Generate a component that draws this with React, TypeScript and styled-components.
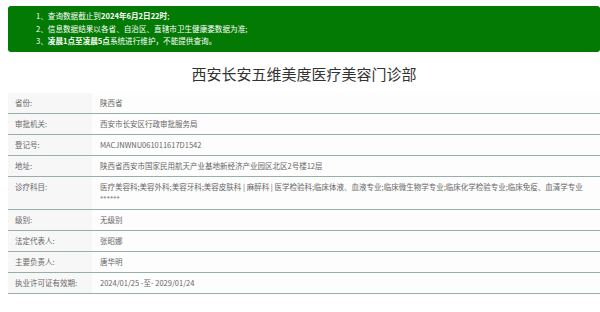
import React from "react";
import styled, { createGlobalStyle } from "styled-components";

const Global = createGlobalStyle`
  html, body { margin: 0; padding: 0; background: #fff; }
  body { font-family: "Noto Sans CJK SC", "Noto Sans", sans-serif; color: #555; }
`;

const Page = styled.div`
  padding: 6px 0 0 8px;
  width: 600px;
  box-sizing: border-box;
`;

const Notice = styled.ol`
  list-style: none;
  margin: 0;
  background: #037a03;
  border-radius: 3px;
  padding: 4px 0 4px 28px;
  height: 46px;
  box-sizing: border-box;
  color: #fff;
  font-size: 7.6px;
  line-height: 12.5px;
`;

const NoticeItem = styled.li`
  white-space: nowrap;
`;

const B = styled.b`
  font-weight: 700;
`;

const Title = styled.h1`
  margin: 0;
  padding: 12px 0 9px;
  text-align: center;
  font-size: 15px;
  line-height: 20px;
  font-weight: 400;
  color: #333;
`;

const Table = styled.div`
  display: grid;
  grid-template-columns: 84px minmax(0, 1fr);
  font-size: 7.5px;
  color: #666;
`;

const Label = styled.div`
  background: #f7f7f7;
  padding: 4px 0 4px 7px;
  line-height: 12px;
  border-bottom: 1px solid #98aea9;
`;

const Value = styled.div`
  display: grid;
  justify-items: start;
  padding: 4px 2px 4px 8px;
  line-height: 12px;
  border-bottom: 1px solid #98aea9;
  background: #fdfdfd;
`;

const Line = styled.span`
  white-space: nowrap;
`;

const Stars = styled.span`
  font-family: "Liberation Sans", sans-serif;
  font-size: 8px;
  letter-spacing: 0.2px;
  color: #777;
`;

const rows: [string, React.ReactNode][] = [
  ["省份:", "陕西省"],
  ["审批机关:", "西安市长安区行政审批服务局"],
  ["登记号:", "MACJNWNU061011617D1542"],
  ["地址:", "陕西省西安市国家民用航天产业基地新经济产业园区北区2号楼12层"],
  [
    "诊疗科目:",
    <>
      <Line>
        医疗美容科;美容外科;美容牙科;美容皮肤科 | 麻醉科 | 医学检验科;临床体液、血液专业;临床微生物学专业;临床化学检验专业;临床免疫、血清学专业
      </Line>
      <Stars>******</Stars>
    </>,
  ],
  ["级别:", "无级别"],
  ["法定代表人:", "张昭娜"],
  ["主要负责人:", "唐华明"],
  ["执业许可证有效期:", "2024/01/25 -至- 2029/01/24"],
];

export default function App() {
  return (
    <Page>
      <Global />
      <Notice>
        <NoticeItem>
          1、查询数据截止到<B>2024年6月2日22时</B>;
        </NoticeItem>
        <NoticeItem>2、信息数据结果以各省、自治区、直辖市卫生健康委数据为准;</NoticeItem>
        <NoticeItem>
          3、<B>凌晨1点至凌晨5点</B>系统进行维护，不能提供查询。
        </NoticeItem>
      </Notice>
      <Title>西安长安五维美度医疗美容门诊部</Title>
      <Table>
        {rows.map(([k, v]) => (
          <React.Fragment key={k}>
            <Label>{k}</Label>
            <Value>{v}</Value>
          </React.Fragment>
        ))}
      </Table>
    </Page>
  );
}
